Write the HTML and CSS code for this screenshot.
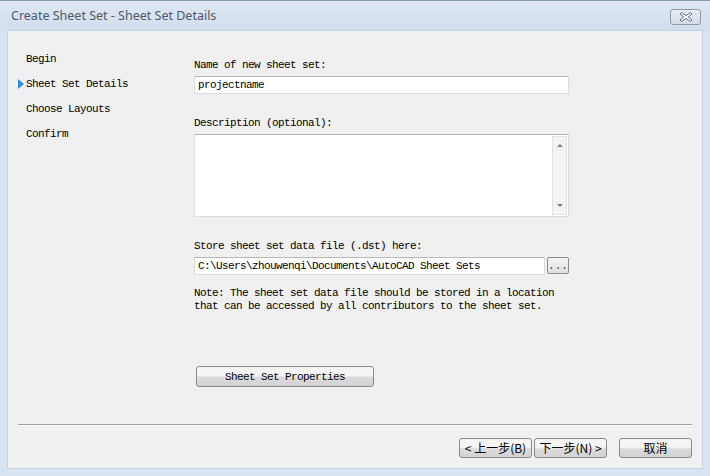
FILE: index.html
```html
<!DOCTYPE html>
<html lang="en">
<head>
  <title>Create Sheet Set - Sheet Set Details</title>
  <meta charset="utf-8">
  <link rel="stylesheet" href="styles.css">
</head>
<body>

  <div class="window">
    <div class="titlebar">
      <span class="title">Create Sheet Set - Sheet Set Details</span>
      <button class="close" type="button" aria-label="Close">
        <svg width="18" height="12" viewBox="0 0 18 12">
          <path d="M4.5 1.5 L9 4.5 L13.5 1.5 L15 3 L11.2 6 L15 9 L13.5 10.5 L9 7.5 L4.5 10.5 L3 9 L6.8 6 L3 3 Z" fill="#fff" stroke="#5f6b78" stroke-width="1" stroke-linejoin="round"/>
        </svg>
      </button>
    </div>

    <div class="client">
      <div class="main">
        <ul class="steps">
          <li>Begin</li>
          <li class="current">Sheet Set Details</li>
          <li>Choose Layouts</li>
          <li>Confirm</li>
        </ul>

        <div class="form">
          <label class="label" for="name">Name of new sheet set:</label>
          <input class="field" id="name" type="text" value="projectname">

          <label class="label gap" for="desc">Description (optional):</label>
          <div class="memo">
            <textarea id="desc"></textarea>
            <div class="scrollbar">
              <span class="arrow up"></span>
              <span class="arrow down"></span>
            </div>
          </div>

          <label class="label gap" for="path">Store sheet set data file (.dst) here:</label>
          <div class="path-row">
            <input class="field" id="path" type="text" value="C:\Users\zhouwenqi\Documents\AutoCAD Sheet Sets">
            <button class="browse" type="button">...</button>
          </div>

          <p class="note">Note: The sheet set data file should be stored in a location<br>that can be accessed by all contributors to the sheet set.</p>

          <button class="btn props" type="button">Sheet Set Properties</button>
        </div>
      </div>

      <div class="separator"></div>

      <div class="footer">
        <button class="btn nav" type="button">&lt;&nbsp;上一步(B)</button>
        <button class="btn nav" type="button">下一步(N)&nbsp;&gt;</button>
        <button class="btn nav cancel" type="button">取消</button>
      </div>
    </div>
  </div>

</body>
</html>
```

FILE: styles.css
```css
*, *::before, *::after {
  margin: 0;
  padding: 0;
  box-sizing: border-box;
}

body {
  width: 710px;
  height: 476px;
  overflow: hidden;
  background: #d6e3f1;
  font-family: "Liberation Mono", "Noto Sans CJK SC", monospace;
  font-size: 11px;
  letter-spacing: -0.6px;
  color: #000;
}

.window {
  display: flex;
  flex-direction: column;
  height: 476px;
  border-top: 1px solid #8a98a8;
  background: linear-gradient(#dfe8f3, #d2dded 30px, #d8e4f2 31px, #d8e4f2);
}

.titlebar {
  display: flex;
  align-items: center;
  justify-content: space-between;
  height: 29px;
  padding: 0 9px 0 11px;
}

.title {
  font-family: "Noto Sans", sans-serif;
  font-size: 12.5px;
  letter-spacing: 0;
  color: #4d5866;
}

.close {
  display: flex;
  align-items: center;
  justify-content: center;
  width: 31px;
  height: 16px;
  margin-top: 3px;
  border: 1px solid #8f9aa6;
  border-radius: 3px;
  background: linear-gradient(#e6edf5, #d4dde8);
}

.client {
  flex: 1;
  display: flex;
  flex-direction: column;
  margin: 0 7px 7px;
  background: #f0f0f0;
  border: 1px solid #c7d3e0;
}

.main {
  flex: 1;
  display: flex;
}

/* wizard steps */
.steps {
  width: 186px;
  padding: 16px 0 0 18px;
  list-style: none;
}

.steps li {
  position: relative;
  height: 25px;
  line-height: 25px;
}

.steps li.current::before {
  content: "";
  position: absolute;
  left: -8px;
  top: 7px;
  border-style: solid;
  border-width: 5px 0 5px 6px;
  border-color: transparent transparent transparent #2b8ee0;
}

/* form column */
.form {
  display: flex;
  flex-direction: column;
  width: 375px;
  padding-top: 27px;
}

.label {
  display: block;
  height: 14px;
  line-height: 14px;
  margin-bottom: 4px;
}

.label.gap {
  margin-top: 22px;
}

.field {
  height: 18px;
  padding: 0 3px;
  border: 1px solid #dcdcdc;
  border-top-color: #b8b8b8;
  background: #fff;
  font: inherit;
  letter-spacing: inherit;
  color: #000;
  outline: none;
}

.memo {
  display: flex;
  height: 83px;
  border: 1px solid #dcdcdc;
  border-top-color: #b8b8b8;
  background: #fff;
}

.memo textarea {
  flex: 1;
  border: 0;
  resize: none;
  outline: none;
  background: transparent;
}

.scrollbar {
  display: flex;
  flex-direction: column;
  justify-content: space-between;
  align-items: center;
  width: 15px;
  margin: 1px 1px 1px 0;
  padding: 7px 0;
  border: 1px solid #e2e2e2;
  background: #f4f4f4;
}

.arrow {
  border-style: solid;
  border-color: transparent;
}

.arrow.up {
  border-width: 0 3px 3px;
  border-bottom-color: #7a7a7a;
}

.arrow.down {
  border-width: 3px 3px 0;
  border-top-color: #7a7a7a;
}

.path-row {
  display: flex;
  gap: 2px;
}

.path-row .field {
  flex: 1;
  width: 0;
}

.browse {
  width: 22px;
  height: 17px;
  border: 1px solid #8c8c8c;
  border-radius: 2px;
  background: linear-gradient(#f6f6f6, #dedede);
  font: inherit;
  letter-spacing: 0;
  line-height: 12px;
  color: #333;
}

.note {
  margin-top: 12px;
  line-height: 13px;
}

/* buttons */
.btn {
  height: 21px;
  border: 1px solid #8a8a8a;
  border-radius: 3px;
  background: linear-gradient(#f5f5f5 45%, #dcdcdc 55%, #d2d2d2);
  font: inherit;
  letter-spacing: inherit;
  color: #000;
}

.props {
  align-self: flex-start;
  width: 178px;
  margin: 53px 0 0 2px;
}

.separator {
  height: 2px;
  margin: 0 10px;
  border-top: 1px solid #a0a0a0;
  border-bottom: 1px solid #fff;
}

.footer {
  display: flex;
  justify-content: flex-end;
  gap: 2px;
  padding: 12px 10px 10px;
}

.nav {
  width: 73px;
  height: 20px;
  font-family: "Noto Sans CJK SC", sans-serif;
  font-size: 12px;
  letter-spacing: 0;
  line-height: 16px;
}

.cancel {
  margin-left: 10px;
}
```
